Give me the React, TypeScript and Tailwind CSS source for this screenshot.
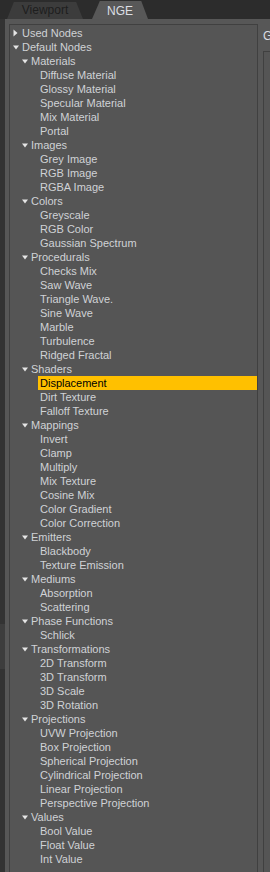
import React from "react";

type Item = { label: string; level: number; kind: "open" | "closed" | "leaf"; selected?: boolean };

const groups: [string, string[]][] = [
  ["Materials", ["Diffuse Material", "Glossy Material", "Specular Material", "Mix Material", "Portal"]],
  ["Images", ["Grey Image", "RGB Image", "RGBA Image"]],
  ["Colors", ["Greyscale", "RGB Color", "Gaussian Spectrum"]],
  ["Procedurals", ["Checks Mix", "Saw Wave", "Triangle Wave.", "Sine Wave", "Marble", "Turbulence", "Ridged Fractal"]],
  ["Shaders", ["Displacement", "Dirt Texture", "Falloff Texture"]],
  ["Mappings", ["Invert", "Clamp", "Multiply", "Mix Texture", "Cosine Mix", "Color Gradient", "Color Correction"]],
  ["Emitters", ["Blackbody", "Texture Emission"]],
  ["Mediums", ["Absorption", "Scattering"]],
  ["Phase Functions", ["Schlick"]],
  ["Transformations", ["2D Transform", "3D Transform", "3D Scale", "3D Rotation"]],
  ["Projections", ["UVW Projection", "Box Projection", "Spherical Projection", "Cylindrical Projection", "Linear Projection", "Perspective Projection"]],
  ["Values", ["Bool Value", "Float Value", "Int Value"]],
];

const items: Item[] = [
  { label: "Used Nodes", level: 0, kind: "closed" },
  { label: "Default Nodes", level: 0, kind: "open" },
];
groups.forEach(([g, kids]) => {
  items.push({ label: g, level: 1, kind: "open" });
  kids.forEach((k) => items.push({ label: k, level: 2, kind: "leaf", selected: k === "Displacement" }));
});

const padByLevel = ["pl-[3px]", "pl-[12px]", "pl-[21px]"];

function Arrow({ kind }: { kind: Item["kind"] }) {
  if (kind === "closed")
    return (
      <svg width="9" height="14" viewBox="0 0 9 14" className="shrink-0">
        <polygon points="0.5,3.5 4.5,7 0.5,10.5" fill="#e6e6e6" />
      </svg>
    );
  if (kind === "open")
    return (
      <svg width="9" height="14" viewBox="0 0 9 14" className="shrink-0">
        <polygon points="0,5.5 6,5.5 3,9.5" fill="#e6e6e6" />
      </svg>
    );
  return <span className="w-[9px] shrink-0" />;
}

function Row({ item }: { item: Item }) {
  return (
    <div className={`flex h-[14px] items-center ${padByLevel[item.level]}`}>
      <Arrow kind={item.kind} />
      <div
        className={`-ml-[2px] flex h-[14px] flex-1 items-center pl-[2px] leading-[14px] whitespace-nowrap ${
          item.selected ? "bg-[#ffc000] text-black" : "text-[#d0d2d6]"
        }`}
      >
        {item.label}
      </div>
    </div>
  );
}

export default function App() {
  return (
    <div
      className="flex h-[872px] w-[270px] flex-col overflow-hidden bg-[#2c2c2c] text-[11px]"
      style={{ fontFamily: '"Liberation Sans", Arial, sans-serif' }}
    >
      {/* tab bar */}
      <div className="flex h-[19px] shrink-0 items-end pl-[7px]">
        <div className="flex h-[17px] w-[76px] items-center justify-center rounded-t-[4px] bg-[#3c3c3c] pb-[1px] text-[12px] text-[#1e1e1e] [clip-path:polygon(0_100%,9%_0,91%_0,100%_100%)]">
          Viewport
        </div>
        <div className="ml-[9px] flex h-[18px] w-[56px] items-center justify-center bg-[#585858] pt-[1px] text-[12px] text-[#dcdfe4] [clip-path:polygon(0_100%,14%_0,88%_0,100%_100%)]">
          NGE
        </div>
      </div>
      {/* body */}
      <div className="flex min-h-0 flex-1">
        <div className="flex w-[5px] shrink-0 flex-col bg-[#333333]">
          <div className="mt-[605px] h-[45px] bg-[#3d3d3d]" />
        </div>
        <div className="flex min-h-0 flex-1 bg-[#575757] pl-[4px] pt-[5px]">
          <div className="flex w-[249px] shrink-0 flex-col border border-b-0 border-[#404040] bg-[#555555] pt-[1px]">
            {items.map((it, i) => (
              <Row key={i} item={it} />
            ))}
          </div>
          <div className="flex min-w-0 flex-1 flex-col pl-[5px]">
            <div className="mt-[5px] h-[14px] text-[12px] leading-[14px] text-[#dcdfe4]">G</div>
            <div className="mt-[8px] flex-1 border-l border-t border-[#404040] bg-[#555555]" />
          </div>
        </div>
      </div>
    </div>
  );
}
